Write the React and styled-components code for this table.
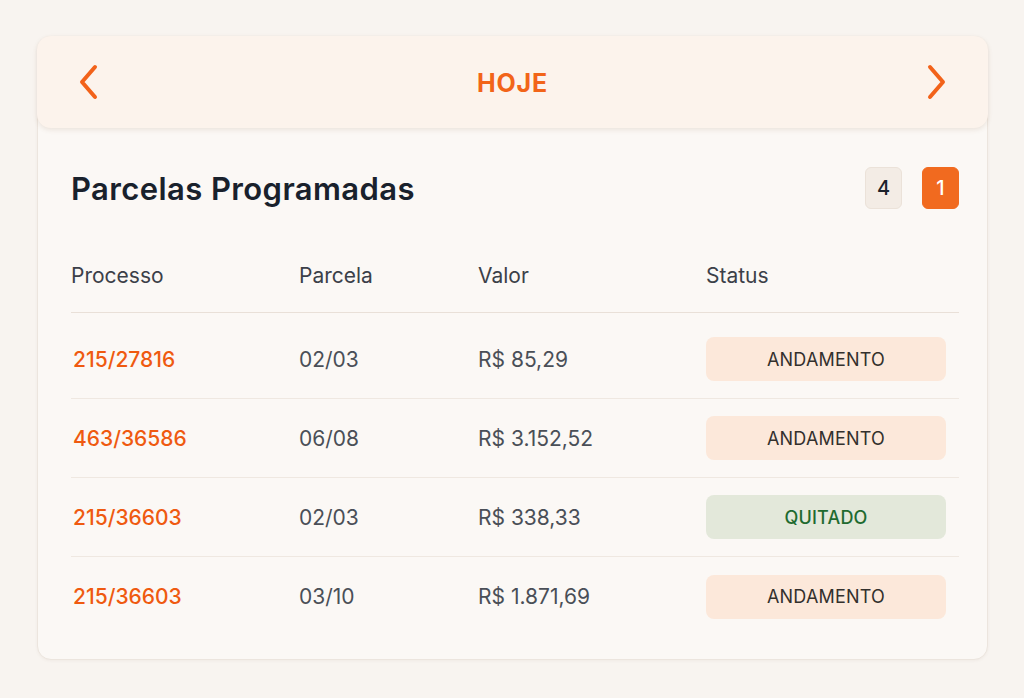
import React from "react";
import styled, { createGlobalStyle } from "styled-components";

const GlobalStyle = createGlobalStyle`
  html, body {
    margin: 0;
    padding: 0;
    background: #f8f4f0;
    font-family: Inter, "Noto Sans", sans-serif;
  }
`;

const Page = styled.div`
  padding: 36px 36px 38px 37px;
`;

const Card = styled.section`
  background: #fbf8f5;
  border: 1px solid #ece5de;
  border-radius: 14px;
  box-shadow: 0 1px 3px rgba(120, 90, 60, 0.06);
  padding-bottom: 23px;
`;

const DayBar = styled.header`
  height: 92px;
  display: flex;
  align-items: center;
  justify-content: space-between;
  padding: 0 40px;
  background: #fcf3ec;
  border-radius: 14px;
  box-shadow: 0 2px 5px rgba(120, 80, 50, 0.12);
  margin: -1px -1px 0 -1px;
  position: relative;
`;

const ArrowButton = styled.button`
  border: none;
  background: none;
  padding: 0;
  width: 24px;
  height: 40px;
  display: flex;
  align-items: center;
  justify-content: center;
  cursor: pointer;
`;

const DayLabel = styled.h1`
  margin: 1px 0 0;
  font-size: 25px;
  font-weight: 700;
  letter-spacing: 0.8px;
  color: #f26419;
`;

const Body = styled.div`
  padding: 0 28px 0 33px;
`;

const TitleRow = styled.div`
  display: flex;
  align-items: center;
  justify-content: space-between;
  margin-top: 39px;
`;

const Title = styled.h2`
  margin: 0;
  font-size: 31px;
  font-weight: 600;
  color: #19212c;
  letter-spacing: 0.4px;
`;

const Counters = styled.div`
  display: flex;
  gap: 20px;
`;

const Counter = styled.span`
  width: 37px;
  height: 42px;
  border-radius: 6px;
  display: flex;
  align-items: center;
  justify-content: center;
  font-size: 20px;
  font-weight: 500;
  box-sizing: border-box;
  background: ${(p) => (p.$active ? "#f16a1f" : "#f3ece5")};
  color: ${(p) => (p.$active ? "#ffffff" : "#1c222b")};
  border: 1px solid ${(p) => (p.$active ? "#f16a1f" : "#ebe2d9")};
`;

const Grid = styled.div`
  display: grid;
  grid-template-columns: 228px 179px 228px 1fr;
`;

const HeadRow = styled.div`
  display: contents;
`;

const HeadCell = styled.div`
  font-size: 21px;
  color: #3b4048;
  padding: 55px 0 24px;
  line-height: 24px;
  border-bottom: 1px solid #e9e0d8;
`;

const Row = styled.div`
  display: grid;
  grid-column: 1 / -1;
  grid-template-columns: subgrid;
  align-items: center;
  height: 79px;
  border-bottom: ${(p) => (p.$last ? "none" : "1px solid #efe8e1")};
  box-sizing: border-box;
  margin-top: ${(p) => (p.$first ? "7px" : "0")};
`;

const Cell = styled.div`
  font-size: 21px;
  color: ${(p) => (p.$accent ? "#ef5a10" : "#4a4f57")};
  font-weight: ${(p) => (p.$accent ? 500 : 400)};
  padding-left: ${(p) => (p.$accent ? "2px" : "0")};
`;

const Status = styled.span`
  display: flex;
  align-items: center;
  justify-content: center;
  width: 240px;
  height: 44px;
  border-radius: 8px;
  font-size: 18px;
  font-weight: ${(p) => (p.$done ? 500 : 400)};
  letter-spacing: 0.2px;
  background: ${(p) => (p.$done ? "#e3e8da" : "#fce8da")};
  color: ${(p) => (p.$done ? "#1f6b30" : "#33302d")};
`;

const Chevron = ({ dir }) => (
  <svg width="22" height="36" viewBox="0 0 22 36" fill="none">
    <path
      d={dir === "left" ? "M17 3 L4 18 L17 33" : "M5 3 L18 18 L5 33"}
      stroke="#f2621a"
      strokeWidth="4"
      strokeLinecap="round"
      strokeLinejoin="round"
    />
  </svg>
);

const parcelas = [
  { processo: "215/27816", parcela: "02/03", valor: "R$ 85,29", status: "ANDAMENTO" },
  { processo: "463/36586", parcela: "06/08", valor: "R$ 3.152,52", status: "ANDAMENTO" },
  { processo: "215/36603", parcela: "02/03", valor: "R$ 338,33", status: "QUITADO" },
  { processo: "215/36603", parcela: "03/10", valor: "R$ 1.871,69", status: "ANDAMENTO" },
];

export default function App() {
  return (
    <>
      <GlobalStyle />
      <Page>
        <Card>
          <DayBar>
            <ArrowButton aria-label="anterior">
              <Chevron dir="left" />
            </ArrowButton>
            <DayLabel>HOJE</DayLabel>
            <ArrowButton aria-label="próximo">
              <Chevron dir="right" />
            </ArrowButton>
          </DayBar>

          <Body>
            <TitleRow>
              <Title>Parcelas Programadas</Title>
              <Counters>
                <Counter>4</Counter>
                <Counter $active>1</Counter>
              </Counters>
            </TitleRow>

            <Grid>
              <HeadRow>
                <HeadCell>Processo</HeadCell>
                <HeadCell>Parcela</HeadCell>
                <HeadCell>Valor</HeadCell>
                <HeadCell>Status</HeadCell>
              </HeadRow>
              {parcelas.map((p, i) => (
                <Row key={i} $first={i === 0} $last={i === parcelas.length - 1}>
                  <Cell $accent>{p.processo}</Cell>
                  <Cell>{p.parcela}</Cell>
                  <Cell>{p.valor}</Cell>
                  <div>
                    <Status $done={p.status === "QUITADO"}>{p.status}</Status>
                  </div>
                </Row>
              ))}
            </Grid>
          </Body>
        </Card>
      </Page>
    </>
  );
}
